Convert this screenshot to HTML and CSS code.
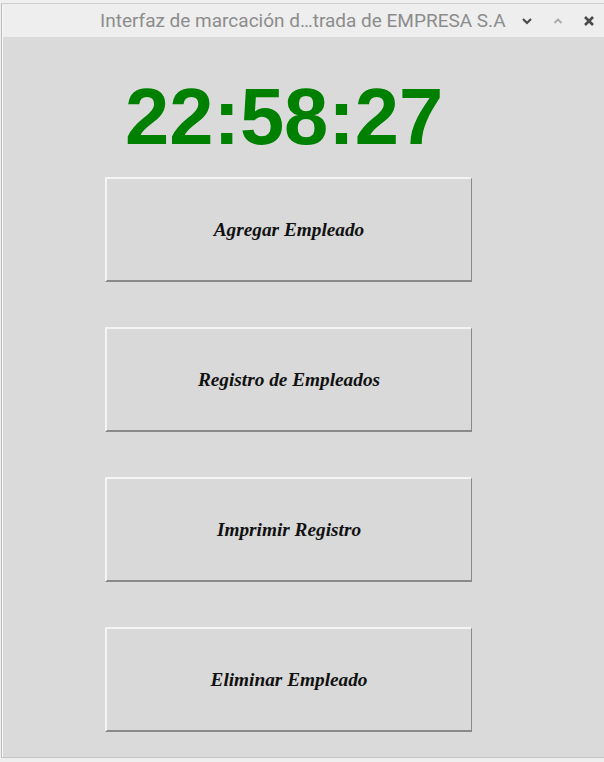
FILE: index.html
```html
<!DOCTYPE html>
<html lang="es">
<head>
<meta charset="utf-8">
<title>Interfaz de marcación</title>
<link rel="stylesheet" href="styles.css">
</head>
<body>
<div class="window">
  <div class="titlebar">
    <span class="title">Interfaz de marcación d…trada de EMPRESA S.A</span>
    <div class="controls">
      <svg class="ctl" width="14" height="14" viewBox="0 0 14 14"><path d="M3 5 L7 9 L11 5" fill="none" stroke="#4a4a4a" stroke-width="2.2"/></svg>
      <svg class="ctl up" width="14" height="14" viewBox="0 0 14 14"><path d="M3.5 9 L7 5.5 L10.5 9" fill="none" stroke="#a8a8a8" stroke-width="1.8"/></svg>
      <svg class="ctl" width="14" height="14" viewBox="0 0 14 14"><path d="M3 3 L11 11 M11 3 L3 11" fill="none" stroke="#4a4a4a" stroke-width="2.6"/></svg>
    </div>
  </div>
  <div class="content">
    <div class="clock">22:58:27</div>
    <button class="btn">Agregar Empleado</button>
    <button class="btn">Registro de Empleados</button>
    <button class="btn">Imprimir Registro</button>
    <button class="btn">Eliminar Empleado</button>
  </div>
</div>
</body>
</html>
```
FILE: styles.css
```css
html, body {
  margin: 0;
  padding: 0;
  background: #efefef;
  height: 762px;
  overflow: hidden;
}
.window {
  margin-top: 3px;
  margin-left: 1px;
  border-left: 1px solid #bdbdbd;
  border-top: 1px solid #cfcfcf;
  border-bottom: 1px solid #c4c4c4;
  padding-left: 1px;
  background: #f7f7f7;
  display: flex;
  flex-direction: column;
}
.titlebar {
  height: 33px;
  flex-shrink: 0;
  background: #eeeeee;
  display: flex;
  align-items: center;
  font-family: Roboto, "Liberation Sans", sans-serif;
}
.title {
  margin-left: 97px;
  font-size: 19px;
  color: #8c8c8c;
  white-space: nowrap;
}
.controls {
  display: flex;
  align-items: center;
  gap: 17px;
  margin-left: 14px;
}
.content {
  background: #dadada;
  height: 720px;
  overflow: hidden;
  padding-left: 102px;
  display: flex;
  flex-direction: column;
  align-items: flex-start;
}
.clock {
  flex-shrink: 0;
  margin-top: 40px;
  margin-left: 20px;
  font-family: "Liberation Sans", Arial, sans-serif;
  font-weight: bold;
  font-size: 79.5px;
  line-height: 79px;
  color: #008000;
  margin-bottom: 21px;
}
.btn {
  flex-shrink: 0;
  box-sizing: border-box;
  width: 367px;
  height: 105px;
  margin: 0 0 45px 0;
  padding: 0;
  background: #d9d9d9;
  border-top: 2px solid #f4f4f4;
  border-left: 2px solid #f4f4f4;
  border-right: 1px solid #8a8a8a;
  border-bottom: 2px solid #8a8a8a;
  font-family: "Liberation Serif", "Times New Roman", serif;
  font-style: italic;
  font-weight: bold;
  font-size: 19.3px;
  color: #111;
  cursor: pointer;
}
```
